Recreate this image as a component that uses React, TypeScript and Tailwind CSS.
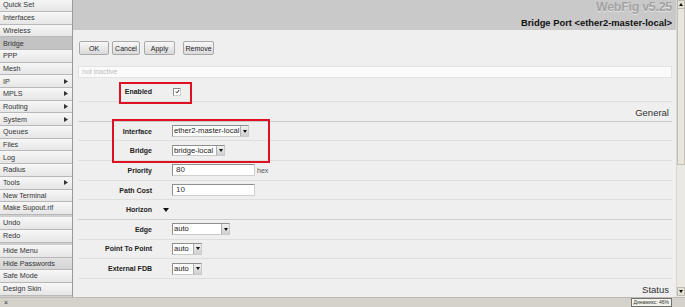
import React from 'react';

const menuGroups: { label: string; arrow?: boolean; active?: boolean; hover?: boolean }[][] = [
  [
    { label: 'Quick Set' },
    { label: 'Interfaces' },
    { label: 'Wireless' },
    { label: 'Bridge', active: true },
    { label: 'PPP' },
    { label: 'Mesh' },
    { label: 'IP', arrow: true },
    { label: 'MPLS', arrow: true },
    { label: 'Routing', arrow: true },
    { label: 'System', arrow: true },
    { label: 'Queues' },
    { label: 'Files' },
    { label: 'Log' },
    { label: 'Radius' },
    { label: 'Tools', arrow: true },
    { label: 'New Terminal' },
    { label: 'Make Supout.rif' },
  ],
  [{ label: 'Undo' }, { label: 'Redo' }],
  [
    { label: 'Hide Menu' },
    { label: 'Hide Passwords', hover: true },
    { label: 'Safe Mode' },
    { label: 'Design Skin' },
  ],
];

function Sidebar() {
  return (
    <aside className="w-[73px] shrink-0 flex flex-col overflow-hidden bg-[#cfcfcf] border-r border-[#9a9a9a]">
      <div className="-mt-[0.8px]" />
      {menuGroups.map((group, gi) => (
        <div key={gi} className={gi > 0 ? 'mt-[2.3px] flex flex-col' : 'flex flex-col'}>
          {group.map((item) => (
            <div
              key={item.label}
              className={
                'h-[12.7px] shrink-0 flex items-center pl-[3px] pr-[4px] text-[7.2px] leading-none text-[#333] border-b border-[#b8b8b8] ' +
                (item.active
                  ? 'bg-[#c3c3c3]'
                  : item.hover
                  ? 'bg-gradient-to-b from-[#e2e2e2] to-[#d4d4d4]'
                  : 'bg-gradient-to-b from-[#f7f7f7] to-[#e6e6e6]')
              }
            >
              <span className="flex-1 whitespace-nowrap">{item.label}</span>
              {item.arrow && (
                <svg width="4" height="5" viewBox="0 0 4 5">
                  <path d="M0 0 L4 2.5 L0 5 Z" fill="#333" />
                </svg>
              )}
            </div>
          ))}
        </div>
      ))}
    </aside>
  );
}

function Btn({ label, className }: { label: string; className: string }) {
  return (
    <div
      className={
        'h-[14px] flex items-center justify-center text-[7px] leading-none text-[#222] border border-[#a8a8a8] rounded-[2px] bg-gradient-to-b from-[#f8f8f8] to-[#dadada] ' +
        className
      }
    >
      {label}
    </div>
  );
}

function DropBtn() {
  return (
    <div className="w-[8px] shrink-0 h-full border-l border-[#b0b0b0] bg-gradient-to-b from-[#f0f0f0] to-[#cfcfcf] flex items-center justify-center">
      <svg width="4" height="3" viewBox="0 0 4 3">
        <path d="M0 0 H4 L2 3 Z" fill="#111" />
      </svg>
    </div>
  );
}

function Select({ value, w, h = 'h-[12px]' }: { value: string; w: string; h?: string }) {
  return (
    <div className={'flex items-stretch bg-white border border-[#8f8f8f] border-r-[#c9c9c9] border-b-[#c9c9c9] ' + w + ' ' + h}>
      <span className="flex-1 pl-[1px] text-[7.6px] leading-[10px] text-[#222] whitespace-nowrap overflow-hidden">{value}</span>
      <DropBtn />
    </div>
  );
}

function TextBox({ value }: { value: string }) {
  return (
    <div className="w-[83px] h-[12px] bg-white border border-[#8f8f8f] border-r-[#cfcfcf] border-b-[#cfcfcf] pl-[3px] text-[8px] leading-[10px] text-[#333]">
      {value}
    </div>
  );
}

function Row({ label, children, line = 'border-[#dedede]' }: { label?: string; children?: React.ReactNode; line?: string }) {
  return (
    <div className={'h-[19.65px] shrink-0 flex items-center border-b ' + line}>
      <div className="w-[74px] text-right text-[7px] font-bold leading-none text-[#222] whitespace-nowrap">{label}</div>
      <div className="ml-[20px] flex items-center">{children}</div>
    </div>
  );
}

function Section({ title, line }: { title: string; line: string }) {
  return (
    <div className={'h-[19.65px] shrink-0 flex items-center justify-end pr-[3px] pt-[2px] text-[9.5px] leading-none text-[#333] ' + line}>
      {title}
    </div>
  );
}

export default function App() {
  return (
    <div className="relative w-[685px] h-[307px] overflow-hidden flex flex-col bg-[#efefef] font-['Liberation_Sans',Arial,sans-serif]">
      <div className="flex flex-1 min-h-0">
        <Sidebar />

        <main className="flex-1 min-w-0 flex flex-col overflow-hidden">
          {/* Header */}
          <div className="h-[30px] shrink-0 bg-[#c9c9c9] flex flex-col items-end pr-[4px]">
            <div className="mt-[1px] text-[12.5px] leading-[12px] font-bold tracking-[-0.3px] text-[#a3a3a3] [text-shadow:0_1px_0_#e6e6e6]">
              WebFig v5.25
            </div>
            <div className="mt-[5px] text-[9.4px] leading-none font-bold text-[#111]">Bridge Port &lt;ether2-master-local&gt;</div>
          </div>

          <div className="flex flex-col pl-[5px] pr-[4px]">
            <div className="mt-[11px] flex items-center">
              <Btn label="OK" className="w-[30px] ml-[1px]" />
              <Btn label="Cancel" className="w-[28px] ml-[3px]" />
              <Btn label="Apply" className="w-[31px] ml-[4px]" />
              <Btn label="Remove" className="w-[31px] ml-[8px]" />
            </div>

            <div className="mt-[11px] h-[12px] bg-[#fafafa] border border-[#e3e3e3] pl-[3px] text-[7px] leading-[10px] text-[#bdbdbd]">
              not inactive
            </div>

            <div className="mt-[4.5px] flex flex-col">
              <Row label="Enabled">
                <div className="w-[8px] h-[8px] bg-white border border-[#8a8a8a] border-r-[#d0d0d0] border-b-[#d0d0d0] flex items-center justify-center ml-[1px]">
                  <svg width="5" height="5" viewBox="0 0 6 6">
                    <path d="M1 3 L2.5 4.6 L5 1.2" stroke="#222" strokeWidth="1.2" fill="none" />
                  </svg>
                </div>
              </Row>
              <Section title="General" line="border-b-[1.5px] border-[#c9c9c9]" />
              <Row label="Interface">
                <Select value="ether2-master-local" w="w-[77px]" />
              </Row>
              <Row label="Bridge">
                <Select value="bridge-local" w="w-[53px]" h="h-[11px]" />
              </Row>
              <Row label="Priority">
                <TextBox value="80" />
                <span className="ml-[2px] text-[7px] leading-none text-[#555]">hex</span>
              </Row>
              <Row label="Path Cost">
                <TextBox value="10" />
              </Row>
              <Row label="Horizon" line="border-[#cdcdcd]">
                <svg width="6" height="4" viewBox="0 0 6 4" className="-ml-[9px]">
                  <path d="M0 0 H6 L3 4 Z" fill="#111" />
                </svg>
              </Row>
              <Row label="Edge">
                <Select value="auto" w="w-[58px]" />
              </Row>
              <Row label="Point To Point">
                <Select value="auto" w="w-[30px]" />
              </Row>
              <Row label="External FDB">
                <Select value="auto" w="w-[30px]" />
              </Row>
              <Section title="Status" line="" />
            </div>
          </div>
        </main>

        {/* Scrollbar */}
        <div className="w-[9px] shrink-0 flex flex-col bg-[#ebe9e3] border-l border-[#d9d6cf]">
          <div className="h-[9px] bg-[#e4e1da] border border-[#bfbbb2] flex items-center justify-center">
            <svg width="4" height="3" viewBox="0 0 4 3">
              <path d="M0 3 H4 L2 0 Z" fill="#111" />
            </svg>
          </div>
          <div className="h-[156px] bg-[#e9e6df] border border-t-0 border-[#c4c0b8]" />
          <div className="flex-1" />
          <div className="h-[9px] mb-[1px] bg-[#e4e1da] border border-[#bfbbb2] flex items-center justify-center">
            <svg width="4" height="3" viewBox="0 0 4 3">
              <path d="M0 0 H4 L2 3 Z" fill="#111" />
            </svg>
          </div>
        </div>
      </div>

      {/* Status bar */}
      <div className="h-[10px] shrink-0 bg-[#d5d2cb] border-t border-[#bdbab3] flex items-center pl-[4px] text-[7px] leading-none text-[#333]">
        <span className="flex-1">×</span>
        <div className="mr-[13px] h-[9px] px-[2px] bg-[#f4f4ec] border border-[#6f6f6f] flex items-center text-[5px] text-[#333] whitespace-nowrap">
          Динамикс: 46%
        </div>
      </div>

      {/* Annotation boxes */}
      <div className="absolute left-[119px] top-[82px] w-[73px] h-[22px] border-2 border-[#dd1122]" />
      <div className="absolute left-[112px] top-[119px] w-[158px] h-[44px] border-2 border-[#dd1122]" />
    </div>
  );
}
